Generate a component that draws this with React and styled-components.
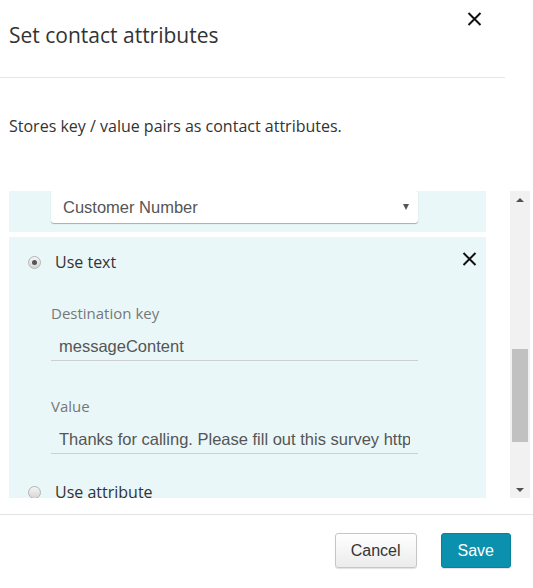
import React from "react";
import styled, { createGlobalStyle } from "styled-components";

const GlobalStyle = createGlobalStyle`
  html, body {
    margin: 0;
    padding: 0;
    background: #fff;
  }
  body {
    font-family: "Open Sans", "Liberation Sans", sans-serif;
    color: #333;
  }
  * { box-sizing: border-box; }
`;

function CloseIcon({ size = 15 }) {
  return (
    <svg width={size} height={size - 1} viewBox="0 0 15 14">
      <path d="M1.5 1 L13.5 13 M13.5 1 L1.5 13" stroke="#111" strokeWidth="2" fill="none" />
    </svg>
  );
}

export default function App() {
  return (
    <Modal>
      <GlobalStyle />
      <Header>
        <Title>Set contact attributes</Title>
        <CloseButton aria-label="Close">
          <CloseIcon />
        </CloseButton>
      </Header>

      <Description>Stores key / value pairs as contact attributes.</Description>

      <Body>
        <ScrollArea>
          <SelectPanel>
            <SelectBox>
              <span>Customer Number</span>
              <Caret />
            </SelectBox>
          </SelectPanel>

          <OptionPanel>
            <RadioRow>
              <RadioOption>
                <Radio $checked />
                <RadioLabel>Use text</RadioLabel>
              </RadioOption>
              <CloseButton aria-label="Remove">
                <CloseIcon />
              </CloseButton>
            </RadioRow>

            <Field $gap={31}>
              <FieldLabel>Destination key</FieldLabel>
              <TextInput readOnly value="messageContent" />
            </Field>

            <Field $gap={35}>
              <FieldLabel>Value</FieldLabel>
              <TextInput
                readOnly
                value="Thanks for calling. Please fill out this survey https://survey.example.com"
              />
            </Field>

            <RadioRow $gap={28}>
              <RadioOption>
                <Radio />
                <RadioLabel>Use attribute</RadioLabel>
              </RadioOption>
            </RadioRow>
          </OptionPanel>
        </ScrollArea>

        <Scrollbar>
          <ArrowButton>
            <Triangle $dir="up" />
          </ArrowButton>
          <Track>
            <Thumb $offset={141} $size={93} />
          </Track>
          <ArrowButton>
            <Triangle $dir="down" />
          </ArrowButton>
        </Scrollbar>
      </Body>

      <Footer>
        <Button>Cancel</Button>
        <Button $primary>Save</Button>
      </Footer>
    </Modal>
  );
}

const Modal = styled.div`
  width: 533px;
  height: 588px;
  background: #fff;
`;

const Header = styled.div`
  width: 505px;
  height: 78px;
  display: flex;
  justify-content: space-between;
  align-items: flex-start;
  padding: 0 23px 0 9px;
  border-bottom: 1px solid #e6e6e6;
`;

const Title = styled.h2`
  margin: 21px 0 0;
  font-size: 21px;
  font-weight: 400;
  line-height: 28px;
  color: #333;
`;

const CloseButton = styled.button`
  margin-top: 12px;
  padding: 0;
  border: 0;
  background: none;
  display: flex;
  cursor: pointer;
`;

const Description = styled.p`
  margin: 38px 0 0 9px;
  font-size: 16px;
  line-height: 20px;
  color: #333;
`;

const Body = styled.div`
  display: flex;
  margin-top: 55px;
  height: 307px;
`;

const ScrollArea = styled.div`
  margin-left: 9px;
  width: 477px;
  overflow: hidden;
  display: flex;
  flex-direction: column;
  gap: 5px;
`;

const SelectPanel = styled.div`
  flex-shrink: 0;
  background: #eaf7f9;
  padding: 0 68px 9px 42px;
`;

const SelectBox = styled.div`
  height: 32px;
  background: #fff;
  border-radius: 3px;
  box-shadow: 0 1px 1px rgba(0, 0, 0, 0.3);
  display: flex;
  align-items: center;
  justify-content: space-between;
  padding: 0 9px 0 12px;
  font-family: "Liberation Sans", Arial, sans-serif;
  font-size: 16.5px;
  color: #555;
`;

const Caret = styled.span`
  width: 0;
  height: 0;
  border-left: 3.5px solid transparent;
  border-right: 3.5px solid transparent;
  border-top: 6px solid #555;
`;

const OptionPanel = styled.div`
  flex-shrink: 0;
  background: #eaf7f9;
  padding: 15px 9px 20px 19px;
`;

const RadioRow = styled.div`
  margin-top: ${(p) => p.$gap || 0}px;
  height: 20px;
  display: flex;
  justify-content: space-between;
  align-items: flex-start;

  ${CloseButton} {
    margin-top: 0;
  }
`;

const RadioOption = styled.label`
  display: flex;
  align-items: center;
  height: 20px;
`;

const Radio = styled.span`
  width: 13px;
  height: 13px;
  border-radius: 50%;
  border: 1px solid #b4b4b4;
  background: linear-gradient(#f4f4f4, #d6d6d6);
  display: flex;
  align-items: center;
  justify-content: center;

  &::after {
    content: "";
    width: 5px;
    height: 5px;
    border-radius: 50%;
    background: #555;
    display: ${(p) => (p.$checked ? "block" : "none")};
  }
`;

const RadioLabel = styled.span`
  margin-left: 14px;
  font-size: 16px;
  line-height: 20px;
  color: #333;
`;

const Field = styled.div`
  margin: ${(p) => p.$gap}px 0 0 23px;
  width: 367px;
`;

const FieldLabel = styled.div`
  font-size: 15px;
  line-height: 20px;
  color: #777;
`;

const TextInput = styled.input`
  display: block;
  margin-top: 10px;
  width: 100%;
  height: 28px;
  padding: 0 8px;
  border: 0;
  border-bottom: 1px solid #cfcfcf;
  background: transparent;
  outline: none;
  font-family: "Liberation Sans", Arial, sans-serif;
  font-size: 16.5px;
  color: #555;
`;

const Scrollbar = styled.div`
  margin-left: 24px;
  width: 20px;
  background: #f1f1f1;
  display: flex;
  flex-direction: column;
`;

const ArrowButton = styled.div`
  height: 17px;
  display: flex;
  align-items: center;
  justify-content: center;
`;

const Triangle = styled.span`
  width: 0;
  height: 0;
  border-left: 4px solid transparent;
  border-right: 4px solid transparent;
  ${(p) =>
    p.$dir === "up"
      ? "border-bottom: 4px solid #505050;"
      : "border-top: 4px solid #505050;"}
`;

const Track = styled.div`
  flex: 1;
  padding: 0 2px;
`;

const Thumb = styled.div`
  margin-top: ${(p) => p.$offset}px;
  height: ${(p) => p.$size}px;
  background: #c1c1c1;
`;

const Footer = styled.div`
  margin-top: 16px;
  border-top: 1px solid #e3e3e3;
  padding: 18px 22px 0 0;
  display: flex;
  justify-content: flex-end;
  gap: 24px;
`;

const Button = styled.button`
  height: 35px;
  padding: 0 ${(p) => (p.$primary ? 16 : 15)}px;
  border-radius: 3px;
  font-family: "Liberation Sans", Arial, sans-serif;
  font-size: 16px;
  cursor: pointer;
  color: ${(p) => (p.$primary ? "#fff" : "#333")};
  background: ${(p) =>
    p.$primary ? "#0b90ae" : "linear-gradient(#ffffff, #ebebeb)"};
  border: 1px solid ${(p) => (p.$primary ? "#08819c" : "#c6c6c6")};
  box-shadow: 0 1px 1px rgba(0, 0, 0, 0.12);
`;
